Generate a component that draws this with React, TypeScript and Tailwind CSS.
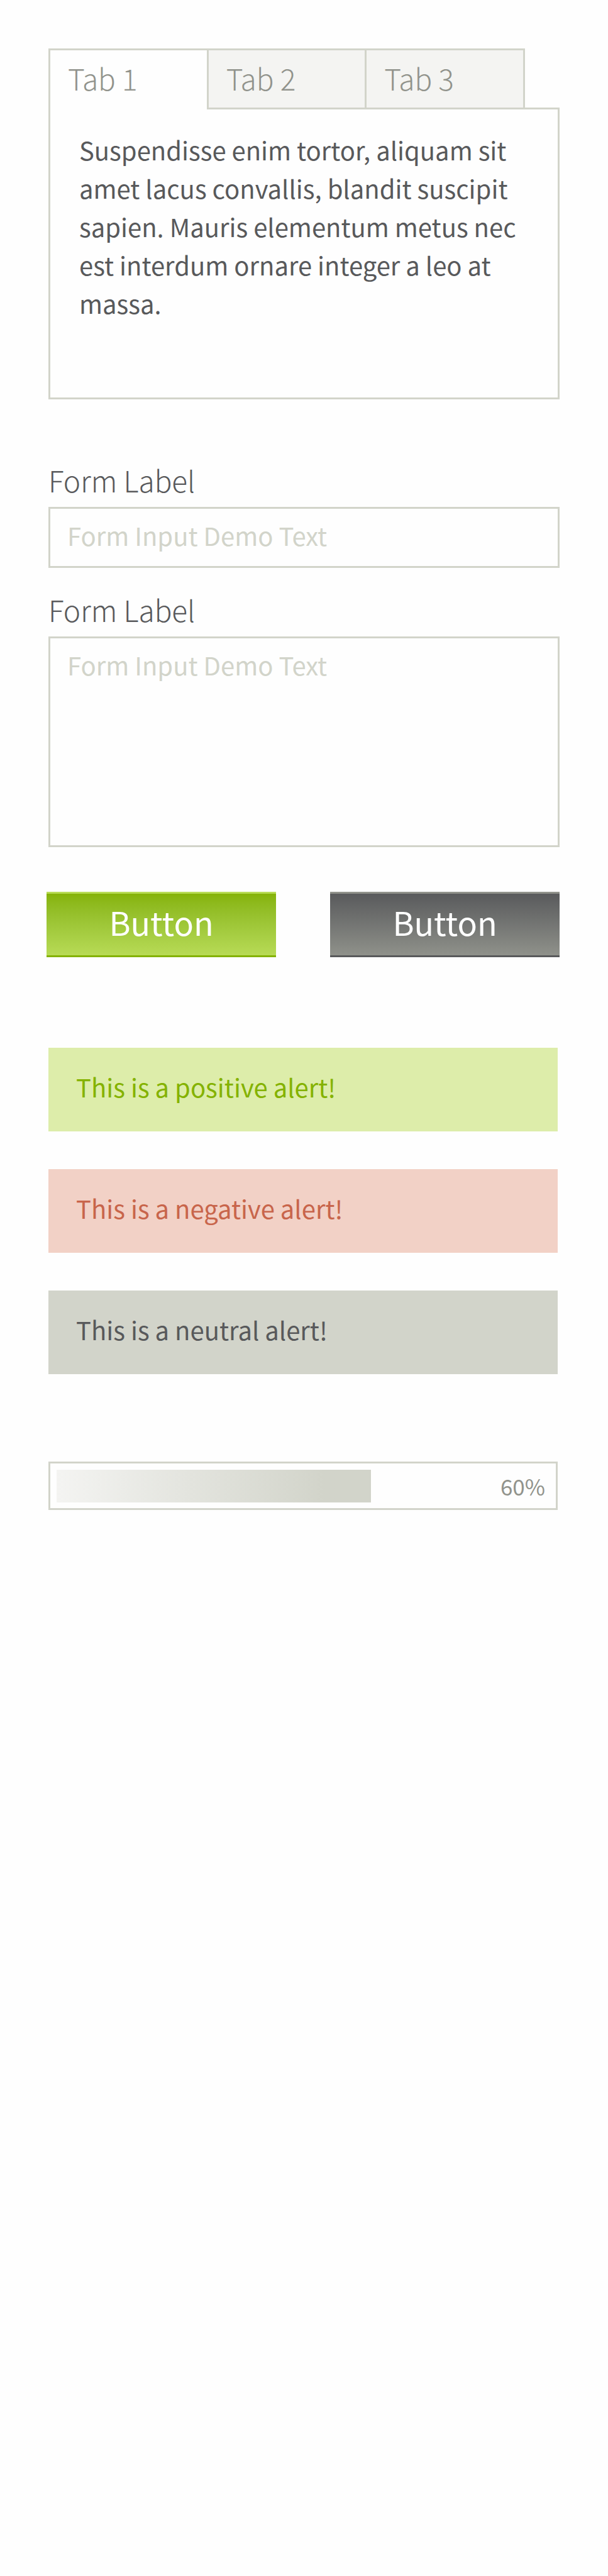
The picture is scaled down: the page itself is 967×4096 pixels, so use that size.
import { useState } from "react";

const tabs = ["Tab 1", "Tab 2", "Tab 3"];

const alerts = [
  { text: "This is a positive alert!", style: "bg-[#ddedaa] text-[#84b200]" },
  { text: "This is a negative alert!", style: "bg-[#f2d1c6] text-[#c8654b]" },
  { text: "This is a neutral alert!", style: "bg-[#d2d4ca] text-[#58595b]" },
];

const field =
  "block w-full resize-none border-[3px] border-[#d2d4ca] bg-transparent px-[27px] text-[40px] leading-[61px] text-[#58595b] outline-none placeholder:text-[#d2d4ca] placeholder:opacity-100";
const label = "mb-[11px] block text-[46px] leading-[64px] font-light";
const button =
  "h-[104px] w-[365px] border-y-[3px] bg-linear-to-b bg-origin-border pb-2 text-[52px] leading-[64px] text-white";

export default function App() {
  const [active, setActive] = useState(0);

  return (
    <main className="min-h-screen bg-[#fefefe] px-[77px] pt-[77px] pb-20 font-['Noto_Sans_CJK_SC','Noto_Sans',sans-serif] text-[#58595b]">
      <section>
        <div
          role="tablist"
          className="relative mr-[55px] -mb-[3px] grid grid-cols-3 border-r-[3px] border-[#d2d4ca]"
        >
          {tabs.map((name, i) => (
            <button
              key={name}
              id={`tab-${i}`}
              role="tab"
              aria-selected={i === active}
              aria-controls="panel"
              onClick={() => setActive(i)}
              className={`h-[97px] border-t-[3px] border-l-[3px] border-[#d2d4ca] pl-7 text-left text-[46px] leading-[64px] font-light text-[#91938c] ${
                i === active ? "bg-[#fefefe] pb-[7px]" : "border-b-[3px] bg-[#f4f4f2] pb-1"
              }`}
            >
              {name}
            </button>
          ))}
        </div>
        <div
          id="panel"
          role="tabpanel"
          aria-labelledby={`tab-${active}`}
          className="min-h-[464px] border-[3px] border-[#d2d4ca] px-[46px] py-[34px]"
        >
          <p className="text-[40px] leading-[61px]">
            Suspendisse enim tortor, aliquam sit amet lacus convallis, blandit suscipit sapien. Mauris
            elementum metus nec est interdum ornare integer a leo at massa.
          </p>
        </div>
      </section>

      <form className="mt-24" onSubmit={(e) => e.preventDefault()}>
        <label htmlFor="line" className={label}>
          Form Label
        </label>
        <input id="line" type="text" placeholder="Form Input Demo Text" className={`${field} h-[97px] pb-2`} />
        <label htmlFor="area" className={`${label} mt-[34px]`}>
          Form Label
        </label>
        <textarea id="area" placeholder="Form Input Demo Text" className={`${field} h-[335px] pt-3`} />
        <div className="mt-[71px] -ml-[3px] flex justify-between">
          <button
            type="submit"
            className={`${button} border-t-[#b9dc57] border-b-[#84b200] from-[#84b200] to-[#b9dc57]`}
          >
            Button
          </button>
          <button
            type="button"
            className={`${button} border-t-[#91938c] border-b-[#58595b] from-[#58595b] to-[#91938c]`}
          >
            Button
          </button>
        </div>
      </form>

      <section className="mt-36 mr-[3px] flex flex-col gap-[60px]">
        {alerts.map((a) => (
          <p key={a.text} role="status" className={`px-11 pt-8 pb-10 text-[40px] leading-[61px] ${a.style}`}>
            {a.text}
          </p>
        ))}
      </section>

      <div
        role="progressbar"
        aria-label="Progress"
        aria-valuenow={60}
        aria-valuemin={0}
        aria-valuemax={100}
        className="mt-[139px] mr-[3px] flex h-[77px] items-center justify-between border-[3px] border-[#d2d4ca] pr-[17px] pl-2.5"
      >
        <div className="h-[52px] w-9/14 bg-linear-to-r from-[#f4f4f2] to-[#d2d4ca] to-85%" />
        <span className="text-[35px] leading-[52px] text-[#91938c]">60%</span>
      </div>
    </main>
  );
}
